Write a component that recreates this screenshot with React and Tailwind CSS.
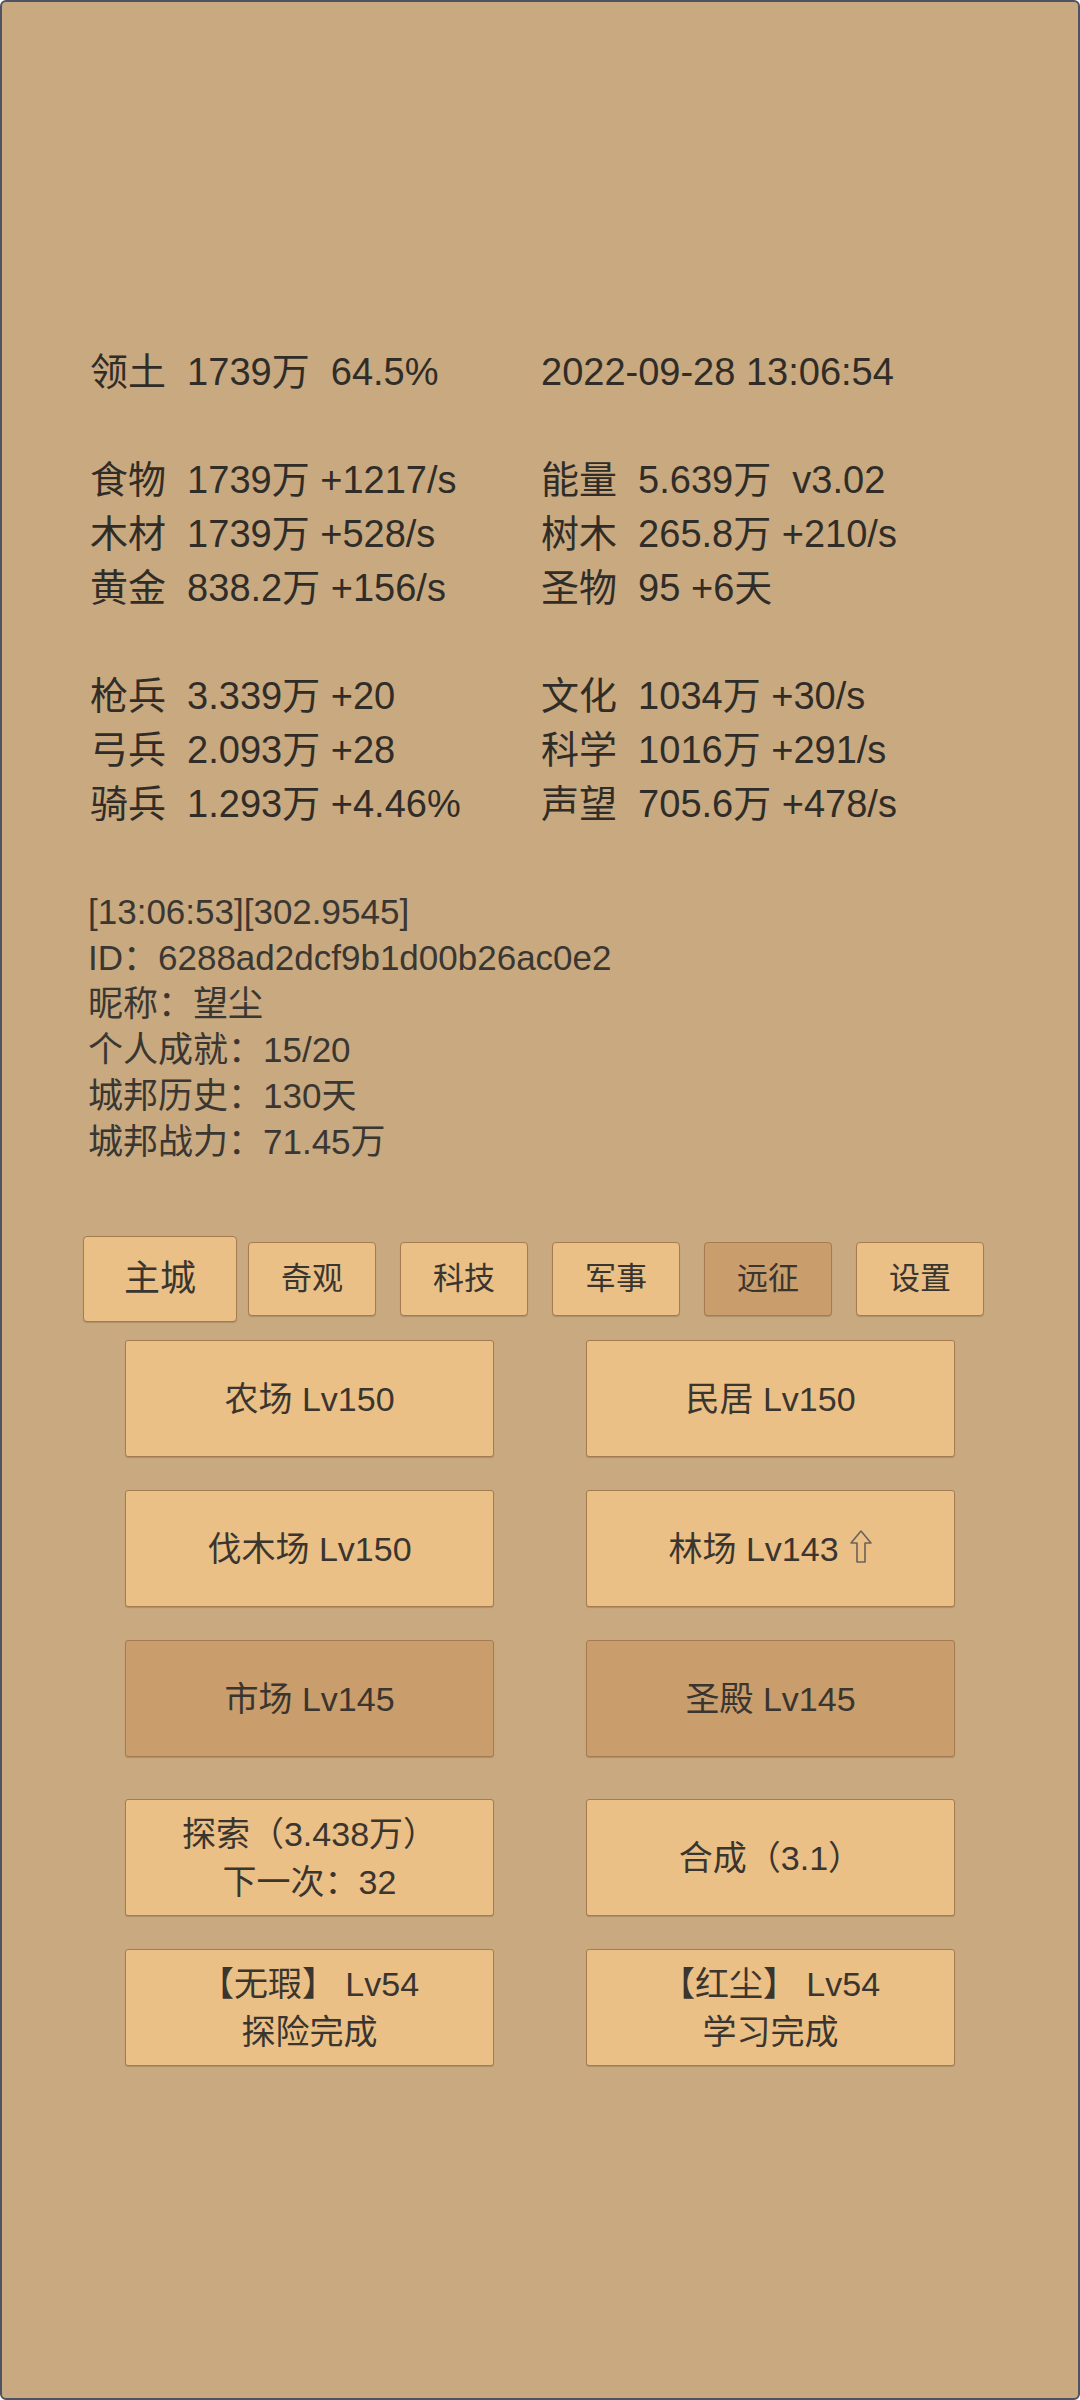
import React from "react";

const FONT = "font-['Liberation_Sans','Noto_Sans_CJK_SC',sans-serif]";

function StatRow({ l, r }) {
  return (
    <div className="flex h-[54px]">
      <div className="w-[451px] shrink-0">{l}</div>
      <div>{r}</div>
    </div>
  );
}

function UpArrow() {
  return (
    <svg width="24" height="36" viewBox="0 0 24 36" className="inline-block ml-[10px] -mt-[4px]">
      <path
        d="M12 2 L22 14 L16 14 L16 33 L8 33 L8 14 L2 14 Z"
        fill="none"
        stroke="#6b6259"
        strokeWidth="1.6"
        strokeLinejoin="round"
      />
    </svg>
  );
}

function Tab({ label, selected, dark }) {
  return (
    <div className="w-[152px] shrink-0 flex justify-center">
      {selected ? (
        <div className="w-[154px] h-[86px] shrink-0 flex items-center justify-center bg-[#eac086] border border-[#a57c52] rounded-[4px] shadow-[0_1px_1px_rgba(0,0,0,0.15)] text-[36px] text-[#3a352f]">
          {label}
        </div>
      ) : (
        <div
          className={
            "w-[128px] h-[74px] shrink-0 flex items-center justify-center border border-[#a57c52] rounded-[4px] shadow-[0_1px_1px_rgba(0,0,0,0.15)] text-[31px] text-[#3a352f] " +
            (dark ? "bg-[#c99d6c]" : "bg-[#eac086]")
          }
        >
          {label}
        </div>
      )}
    </div>
  );
}

function Btn({ children, dark }) {
  return (
    <div
      className={
        "w-[369px] h-[117px] flex flex-col items-center justify-center border border-[#a57c52] rounded-[3px] shadow-[0_1px_1px_rgba(0,0,0,0.15)] text-[34px] leading-[48px] text-center text-[#3a352f] " +
        (dark ? "bg-[#c99d6c]" : "bg-[#eac086]")
      }
    >
      {children}
    </div>
  );
}

function BtnRow({ children, className = "" }) {
  return <div className={"flex justify-center gap-x-[92px] " + className}>{children}</div>;
}

export default function App() {
  return (
    <div
      className={
        "w-[1080px] h-[2400px] bg-[#c9a97f] border-2 border-[#4d5264] rounded-[6px] overflow-hidden " +
        FONT
      }
    >
      <div className="pt-[343px] pl-[88px] text-[38px] leading-[54px] text-[#302d29] whitespace-pre">
        <StatRow l={"领土  1739万  64.5%"} r={"2022-09-28 13:06:54"} />
        <div className="h-[54px]" />
        <StatRow l={"食物  1739万 +1217/s"} r={"能量  5.639万  v3.02"} />
        <StatRow l={"木材  1739万 +528/s"} r={"树木  265.8万 +210/s"} />
        <StatRow l={"黄金  838.2万 +156/s"} r={"圣物  95 +6天"} />
        <div className="h-[54px]" />
        <StatRow l={"枪兵  3.339万 +20"} r={"文化  1034万 +30/s"} />
        <StatRow l={"弓兵  2.093万 +28"} r={"科学  1016万 +291/s"} />
        <StatRow l={"骑兵  1.293万 +4.46%"} r={"声望  705.6万 +478/s"} />
      </div>

      <div className="mt-[58px] pl-[86px] text-[35px] leading-[46px] text-[#3a3732]">
        <div>[13:06:53][302.9545]</div>
        <div>ID：6288ad2dcf9b1d00b26ac0e2</div>
        <div>昵称：望尘</div>
        <div>个人成就：15/20</div>
        <div>城邦历史：130天</div>
        <div>城邦战力：71.45万</div>
      </div>

      <div className="mt-[77px] h-[74px] flex items-center justify-center">
        <Tab label="主城" selected />
        <Tab label="奇观" />
        <Tab label="科技" />
        <Tab label="军事" />
        <Tab label="远征" dark />
        <Tab label="设置" />
      </div>

      <div className="mt-[24px] flex flex-col">
        <BtnRow>
          <Btn>农场 Lv150</Btn>
          <Btn>民居 Lv150</Btn>
        </BtnRow>
        <BtnRow className="mt-[33px]">
          <Btn>伐木场 Lv150</Btn>
          <Btn>
            <div className="flex items-center">
              林场 Lv143
              <UpArrow />
            </div>
          </Btn>
        </BtnRow>
        <BtnRow className="mt-[33px]">
          <Btn dark>市场 Lv145</Btn>
          <Btn dark>圣殿 Lv145</Btn>
        </BtnRow>
        <BtnRow className="mt-[42px]">
          <Btn>
            <div>探索（3.438万）</div>
            <div>下一次：32</div>
          </Btn>
          <Btn>合成（3.1）</Btn>
        </BtnRow>
        <BtnRow className="mt-[33px]">
          <Btn>
            <div>【无瑕】 Lv54</div>
            <div>探险完成</div>
          </Btn>
          <Btn>
            <div>【红尘】 Lv54</div>
            <div>学习完成</div>
          </Btn>
        </BtnRow>
      </div>
    </div>
  );
}
